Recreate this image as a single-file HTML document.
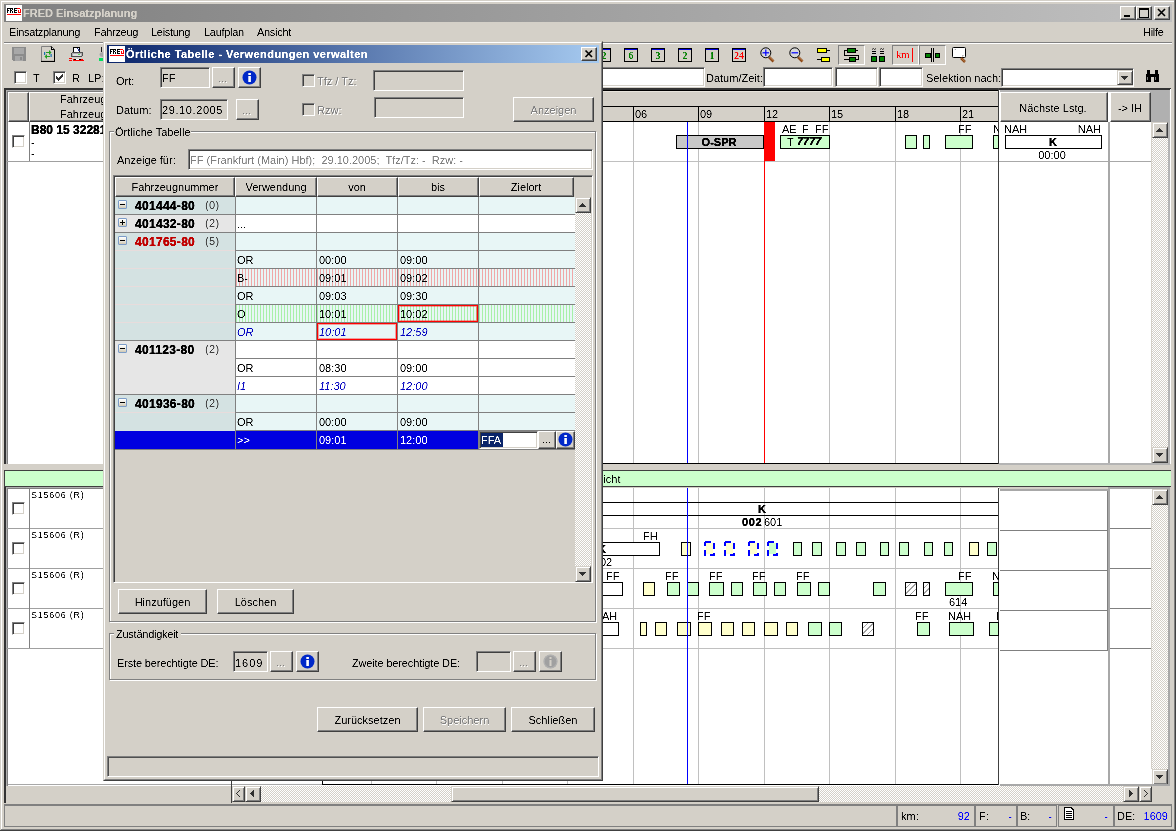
<!DOCTYPE html><html><head><meta charset="utf-8"><style>
*{margin:0;padding:0;box-sizing:border-box}
html,body{width:1176px;height:831px;overflow:hidden;background:#D4D0C8}
body{will-change:transform}
body>div.t{filter:url(#th)}
body{position:relative;font-family:"Liberation Sans",sans-serif;font-size:11px;color:#000}
div{position:absolute}
.t{white-space:nowrap}
.sb{border:1px solid;border-color:#D4D0C8 #404040 #404040 #D4D0C8;box-shadow:inset 1px 1px #fff,inset -1px -1px #808080}
.rb{border:1px solid;border-color:#fff #404040 #404040 #fff;box-shadow:inset -1px -1px #808080}
.sk{border:1px solid;border-color:#808080 #fff #fff #808080;box-shadow:inset 1px 1px #404040,inset -1px -1px #D4D0C8}
.ts{border:1px solid;border-color:#808080 #fff #fff #808080}
</style></head><body><svg width="0" height="0" style="position:absolute"><filter id="th" filterUnits="userSpaceOnUse" x="-20" y="-20" width="1300" height="80" color-interpolation-filters="sRGB"><feComponentTransfer><feFuncA type="linear" slope="2" intercept="-0.5"/></feComponentTransfer></filter></svg><div style="left:0px;top:0px;width:1176px;height:831px;background:#D4D0C8"></div><div style="left:1px;top:1px;width:1173px;height:1px;background:#fff"></div><div style="left:1px;top:1px;width:1px;height:828px;background:#fff"></div><div style="left:1174px;top:0px;width:1px;height:831px;background:#808080"></div><div style="left:1175px;top:0px;width:1px;height:831px;background:#404040"></div><div style="left:1px;top:829px;width:1174px;height:1px;background:#808080"></div><div style="left:0px;top:830px;width:1176px;height:1px;background:#404040"></div><div style="left:4px;top:4px;width:1168px;height:18px;background:linear-gradient(90deg,#808080,#C0C0C0)"></div><div style="left:6px;top:5px;width:16px;height:16px;background:#fff"></div><svg style="position:absolute;left:6px;top:5px;" width="16" height="16" viewBox="0 0 16 16" shape-rendering="crispEdges"><rect x="1" y="3" width="1" height="5" fill="#000"/><rect x="2" y="3" width="2" height="1" fill="#000"/><rect x="2" y="5" width="1" height="1" fill="#000"/><rect x="4" y="3" width="1" height="5" fill="#000"/><rect x="5" y="3" width="2" height="1" fill="#000"/><rect x="6" y="4" width="1" height="1" fill="#000"/><rect x="5" y="5" width="1" height="1" fill="#000"/><rect x="6" y="6" width="1" height="2" fill="#000"/><rect x="8" y="3" width="1" height="5" fill="#000"/><rect x="9" y="3" width="2" height="1" fill="#000"/><rect x="9" y="5" width="2" height="1" fill="#000"/><rect x="9" y="7" width="2" height="1" fill="#000"/><rect x="11" y="3" width="3" height="1" fill="#f00"/><rect x="14" y="4" width="1" height="4" fill="#f00"/><rect x="12" y="7" width="2" height="1" fill="#f00"/><rect x="12" y="5" width="1" height="2" fill="#f00"/><rect x="1" y="9" width="14" height="1" fill="#f00"/></svg><div class="t" style="left:23px;top:6px;font-size:11px;line-height:14px;font-weight:bold;color:#D4D0C8;-webkit-text-stroke:0.15px #D4D0C8">FRED Einsatzplanung</div><div class="rb" style="left:1120px;top:6px;width:16px;height:14px;background:#D4D0C8;"></div><div class="rb" style="left:1136px;top:6px;width:16px;height:14px;background:#D4D0C8;"></div><div class="rb" style="left:1154px;top:6px;width:16px;height:14px;background:#D4D0C8;"></div><svg style="position:absolute;left:1120px;top:6px;" width="16" height="14" viewBox="0 0 16 14" shape-rendering="crispEdges"><rect x="4" y="9" width="6" height="2" fill="#000"/></svg><svg style="position:absolute;left:1136px;top:6px;" width="16" height="14" viewBox="0 0 16 14" shape-rendering="crispEdges"><rect x="3" y="2" width="9" height="9" fill="none" stroke="#000" stroke-width="1" transform="translate(0.5,0.5)"/><rect x="3" y="2" width="9" height="2" fill="#000"/></svg><svg style="position:absolute;left:1154px;top:6px;" width="16" height="14" viewBox="0 0 16 14" shape-rendering="crispEdges"><path d="M4 3 L11 10 M11 3 L4 10" stroke="#000" stroke-width="1.6" shape-rendering="auto"/></svg><div class="t" style="left:9px;top:25px;font-size:11px;line-height:14px;letter-spacing:-0.3px">Einsatzplanung</div><div class="t" style="left:94px;top:25px;font-size:11px;line-height:14px;letter-spacing:-0.3px">Fahrzeug</div><div class="t" style="left:151px;top:25px;font-size:11px;line-height:14px;letter-spacing:-0.3px">Leistung</div><div class="t" style="left:204px;top:25px;font-size:11px;line-height:14px;letter-spacing:-0.3px">Laufplan</div><div class="t" style="left:257px;top:25px;font-size:11px;line-height:14px;letter-spacing:-0.3px">Ansicht</div><div class="t" style="left:1143px;top:25px;font-size:11px;line-height:14px;letter-spacing:-0.3px">Hilfe</div><div style="left:4px;top:42px;width:1168px;height:1px;background:#808080"></div><div style="left:4px;top:43px;width:1168px;height:1px;background:#fff"></div><svg style="position:absolute;left:12px;top:47px;" width="14" height="14" viewBox="0 0 14 14" shape-rendering="crispEdges"><rect x="0" y="0" width="14" height="14" fill="#8C8C8C"/><rect x="2" y="1" width="10" height="6" fill="#A8A8A8"/><rect x="3" y="9" width="8" height="5" fill="#A8A8A8"/><rect x="8" y="10" width="2" height="3" fill="#8C8C8C"/><rect x="0" y="13" width="1" height="1" fill="#D4D0C8"/></svg><svg style="position:absolute;left:41px;top:46px;shape-rendering:auto" width="14" height="16" viewBox="0 0 14 16" shape-rendering="crispEdges"><path d="M0.5 15.5 V0.5 H10.5" fill="none" stroke="#808080"/><path d="M10 0.5 L13.5 4 V15.5 H0" fill="none" stroke="#000"/><path d="M0 15.5 H14" stroke="#000" stroke-width="1.2"/><path d="M10 0 L10 4 L14 4 Z" fill="#000"/><path d="M11 1.5 L11 3 L12.5 3 Z" fill="#fff"/><path d="M5 6 H8 V4 L10.5 6.5 L8 9 V7 H5 Z" fill="#22A020" shape-rendering="auto"/><path d="M9 10 H6 V8 L3.5 10.5 L6 13 V11 H9 Z" fill="#22A020" shape-rendering="auto"/><rect x="3" y="6" width="1.2" height="3" fill="#1870B0"/><rect x="9.5" y="8" width="1.2" height="3" fill="#1870B0"/></svg><svg style="position:absolute;left:69px;top:46px;shape-rendering:crispEdges" width="16" height="16" viewBox="0 0 16 16" shape-rendering="crispEdges"><rect x="4.5" y="1.5" width="6" height="5" fill="#fff" stroke="#000"/><path d="M8.5 2.5 L10.5 5" stroke="#203090" stroke-width="1.2"/><rect x="2.5" y="6.5" width="11" height="4" rx="1.5" fill="#B0B0B0" stroke="#505050"/><rect x="4" y="8" width="8" height="1.5" fill="#E0E0E0"/><rect x="9" y="7.5" width="1.5" height="1" fill="#60E060"/><rect x="0" y="12" width="3" height="1" fill="#f00"/><rect x="0" y="14" width="3" height="1" fill="#f00"/><path d="M4 12.5 H12 L15 14.5 H4 Z" fill="#f00"/><rect x="5" y="13" width="7" height="1" fill="#000"/><rect x="7" y="13" width="3" height="1" fill="#fff"/></svg><svg style="position:absolute;left:96px;top:46px;shape-rendering:auto" width="8" height="16" viewBox="0 0 8 16" shape-rendering="crispEdges"><rect x="5" y="1" width="1" height="5" fill="#202020"/><path d="M7 6 Q3 6.5 3.5 9 Q4 11 7 11 Z" fill="#A8A8A8"/><rect x="3" y="12" width="5" height="3" fill="#00E060"/></svg><div class="sk" style="left:14px;top:71px;width:13px;height:13px;background:#fff;"></div><div class="t" style="left:33px;top:71px;font-size:11px;line-height:14px;">T</div><div class="sk" style="left:53px;top:71px;width:13px;height:13px;background:#fff;"></div><svg style="position:absolute;left:53px;top:71px;" width="13" height="13" viewBox="0 0 13 13" shape-rendering="crispEdges"><rect x="9" y="3" width="1" height="1" fill="#333"/><rect x="8" y="4" width="1" height="1" fill="#333"/><rect x="9" y="4" width="1" height="1" fill="#333"/><rect x="3" y="5" width="1" height="1" fill="#333"/><rect x="7" y="5" width="1" height="1" fill="#333"/><rect x="8" y="5" width="1" height="1" fill="#333"/><rect x="9" y="5" width="1" height="1" fill="#333"/><rect x="3" y="6" width="1" height="1" fill="#333"/><rect x="4" y="6" width="1" height="1" fill="#333"/><rect x="6" y="6" width="1" height="1" fill="#333"/><rect x="7" y="6" width="1" height="1" fill="#333"/><rect x="8" y="6" width="1" height="1" fill="#333"/><rect x="3" y="7" width="1" height="1" fill="#333"/><rect x="4" y="7" width="1" height="1" fill="#333"/><rect x="5" y="7" width="1" height="1" fill="#333"/><rect x="6" y="7" width="1" height="1" fill="#333"/><rect x="7" y="7" width="1" height="1" fill="#333"/><rect x="4" y="8" width="1" height="1" fill="#333"/><rect x="5" y="8" width="1" height="1" fill="#333"/><rect x="6" y="8" width="1" height="1" fill="#333"/><rect x="5" y="9" width="1" height="1" fill="#333"/></svg><div class="t" style="left:72px;top:71px;font-size:11px;line-height:14px;">R</div><div class="t" style="left:88px;top:71px;font-size:11px;line-height:14px;">LP:</div><div style="left:597px;top:48px;width:14px;height:14px;background:#D4D0C8;border:1px solid #000;box-shadow:inset 0 1px 0 #0000E0"></div><div class="t" style="left:597px;top:50px;width:14px;text-align:center;font:bold 10px/12px 'Liberation Serif';color:#008000">2</div><div style="left:624px;top:48px;width:14px;height:14px;background:#D4D0C8;border:1px solid #000;box-shadow:inset 0 1px 0 #0000E0"></div><div class="t" style="left:624px;top:50px;width:14px;text-align:center;font:bold 10px/12px 'Liberation Serif';color:#008000">6</div><div style="left:651px;top:48px;width:14px;height:14px;background:#D4D0C8;border:1px solid #000;box-shadow:inset 0 1px 0 #0000E0"></div><div class="t" style="left:651px;top:50px;width:14px;text-align:center;font:bold 10px/12px 'Liberation Serif';color:#008000">3</div><div style="left:678px;top:48px;width:14px;height:14px;background:#D4D0C8;border:1px solid #000;box-shadow:inset 0 1px 0 #0000E0"></div><div class="t" style="left:678px;top:50px;width:14px;text-align:center;font:bold 10px/12px 'Liberation Serif';color:#008000">2</div><div style="left:705px;top:48px;width:14px;height:14px;background:#D4D0C8;border:1px solid #000;box-shadow:inset 0 1px 0 #0000E0"></div><div class="t" style="left:705px;top:50px;width:14px;text-align:center;font:bold 10px/12px 'Liberation Serif';color:#008000">1</div><div style="left:732px;top:48px;width:14px;height:14px;background:#D4D0C8;border:1px solid #000;box-shadow:inset 0 1px 0 #0000E0"></div><div class="t" style="left:732px;top:50px;width:14px;text-align:center;font:bold 10px/12px 'Liberation Serif';color:#f00">24</div><svg style="position:absolute;left:760px;top:47px;shape-rendering:auto" width="16" height="16" viewBox="0 0 16 16" shape-rendering="crispEdges"><path d="M9 10 L13.5 14.5" stroke="#8B4513" stroke-width="2.6"/><path d="M9.5 9.8 L13.5 13.8" stroke="#E0B080" stroke-width="0.6"/><circle cx="5.8" cy="5.8" r="5" fill="#D8D8D8" stroke="#000" stroke-width="1"/><path d="M2.5 5.8 H9.1" stroke="#0000FF" stroke-width="1.2"/><path d="M5.8 2.5 V9.1" stroke="#0000FF" stroke-width="1.2"/></svg><svg style="position:absolute;left:789px;top:47px;shape-rendering:auto" width="16" height="16" viewBox="0 0 16 16" shape-rendering="crispEdges"><path d="M9 10 L13.5 14.5" stroke="#8B4513" stroke-width="2.6"/><path d="M9.5 9.8 L13.5 13.8" stroke="#E0B080" stroke-width="0.6"/><circle cx="5.8" cy="5.8" r="5" fill="#D8D8D8" stroke="#000" stroke-width="1"/><path d="M2.5 5.8 H9.1" stroke="#0000FF" stroke-width="1.2"/></svg><svg style="position:absolute;left:816px;top:47px;" width="16" height="16" viewBox="0 0 16 16" shape-rendering="crispEdges"><rect x="1.5" y="1.5" width="9" height="4" fill="#FFFF00" stroke="#000"/><path d="M10.5 3.5 H14" stroke="#000"/><rect x="5.5" y="10.5" width="8" height="4" fill="#FFFF00" stroke="#000"/><path d="M1 12.5 H5.5" stroke="#000"/></svg><div style="left:838px;top:45px;width:27px;height:20px;border:1px solid;border-color:#808080 #fff #fff #808080;background:#D4D0C8"></div><div style="left:892px;top:45px;width:27px;height:20px;border:1px solid;border-color:#808080 #fff #fff #808080;background:#D4D0C8"></div><div style="left:919px;top:45px;width:27px;height:20px;border:1px solid;border-color:#808080 #fff #fff #808080;background:#D4D0C8"></div><svg style="position:absolute;left:844px;top:47px;" width="16" height="16" viewBox="0 0 16 16" shape-rendering="crispEdges"><path d="M3 3.5 H0.5 V8.5 H14.5 V12.5 H11" fill="none" stroke="#000"/><path d="M11 3.5 H14 M0 12.5 H5" stroke="#000"/><rect x="3.5" y="1.5" width="8" height="4" fill="#008000" stroke="#000"/><rect x="5.5" y="10.5" width="6" height="4" fill="#008000" stroke="#000"/></svg><svg style="position:absolute;left:870px;top:47px;" width="16" height="16" viewBox="0 0 16 16" shape-rendering="crispEdges"><rect x="1.5" y="9.5" width="5" height="5" fill="#008000" stroke="#000"/><rect x="9.5" y="9.5" width="5" height="5" fill="#008000" stroke="#000"/><path d="M2 4.5 H6 M2 6.5 H6 M10 4.5 H14 M10 6.5 H14" stroke="#000"/><path d="M2 2.5 L3.5 1.5 L4.5 2.5 L6 1.5 M10 2.5 L11.5 1.5 L12.5 2.5 L14 1.5" stroke="#000" fill="none" stroke-width="0.8" shape-rendering="auto"/></svg><div class="t" style="left:896px;top:47px;font:11px/14px 'Liberation Serif';color:#f00;letter-spacing:-0.6px">km</div><div style="left:912px;top:48px;width:1px;height:14px;background:#f00"></div><svg style="position:absolute;left:924px;top:47px;" width="16" height="16" viewBox="0 0 16 16" shape-rendering="crispEdges"><rect x="1.5" y="6.5" width="5" height="4" fill="#008000" stroke="#000"/><rect x="11.5" y="6.5" width="4" height="4" fill="#008000" stroke="#000"/><path d="M7.5 1 V15 M9.5 1 V15" stroke="#000"/></svg><svg style="position:absolute;left:952px;top:47px;shape-rendering:auto" width="16" height="16" viewBox="0 0 16 16" shape-rendering="crispEdges"><rect x="0.5" y="0.5" width="13" height="10" rx="1" fill="#fff" stroke="#000"/><path d="M3 3 V2.5 H4 M11 8 V9 H10" stroke="#A0A0A0" fill="none"/><path d="M9 11 L13 15" stroke="#8B4513" stroke-width="2.5"/><path d="M9.5 11.2 L13 14.7" stroke="#E0B080" stroke-width="0.6"/></svg><div class="sk" style="left:600px;top:67px;width:105px;height:20px;background:#fff;"></div><div class="t" style="left:706px;top:71px;font-size:11px;line-height:14px;">Datum/Zeit:</div><div class="sk" style="left:763px;top:67px;width:70px;height:20px;background:#fff;"></div><div class="sk" style="left:835px;top:67px;width:43px;height:20px;background:#fff;"></div><div class="sk" style="left:879px;top:67px;width:44px;height:20px;background:#fff;"></div><div class="t" style="left:926px;top:71px;font-size:11px;line-height:14px;">Selektion nach:</div><div class="sk" style="left:1001px;top:68px;width:133px;height:19px;background:#fff;"></div><div class="sb" style="left:1117px;top:70px;width:16px;height:15px;background:#D4D0C8"></div><svg style="position:absolute;left:1117px;top:70px;" width="16" height="15" viewBox="0 0 16 15" shape-rendering="crispEdges"><rect x="4" y="6" width="7" height="1" fill="#303030"/><rect x="5" y="7" width="5" height="1" fill="#303030"/><rect x="6" y="8" width="3" height="1" fill="#303030"/><rect x="7" y="9" width="1" height="1" fill="#303030"/></svg><svg style="position:absolute;left:1145px;top:69px;" width="16" height="14" viewBox="0 0 16 14" shape-rendering="crispEdges"><rect x="1" y="5" width="5" height="8" fill="#000"/><rect x="9" y="5" width="5" height="8" fill="#000"/><rect x="2" y="1" width="3" height="5" fill="#000"/><rect x="10" y="1" width="3" height="5" fill="#000"/><rect x="5" y="5" width="5" height="3" fill="#000"/><rect x="2" y="8" width="1" height="3" fill="#808080"/><rect x="10" y="8" width="1" height="3" fill="#808080"/></svg><div style="left:4px;top:88px;width:1167px;height:376px;background:#fff"></div><div style="left:4px;top:88px;width:1167px;height:1px;background:#333"></div><div style="left:4px;top:88px;width:1px;height:376px;background:#333"></div><div style="left:5px;top:89px;width:1165px;height:1px;background:#333"></div><div style="left:5px;top:89px;width:1px;height:375px;background:#333"></div><div style="left:6px;top:90px;width:1164px;height:32px;background:#D4D0C8"></div><div style="left:6px;top:90px;width:584px;height:1px;background:#B0B0B0"></div><div style="left:6px;top:90px;width:1px;height:374px;background:#B0B0B0"></div><div style="left:7px;top:91px;width:583px;height:1px;background:#808080"></div><div style="left:7px;top:91px;width:1px;height:373px;background:#808080"></div><div style="left:590px;top:90px;width:409px;height:1px;background:#000"></div><div style="left:590px;top:91px;width:408px;height:1px;background:#E8E4DC"></div><div class="rb" style="left:8px;top:92px;width:21px;height:30px;background:#D4D0C8;"></div><div class="rb" style="left:29px;top:92px;width:420px;height:30px;background:#D4D0C8;"></div><div class="t" style="left:60px;top:92px;font-size:11px;line-height:14px;">Fahrzeugnummer</div><div class="t" style="left:60px;top:107px;font-size:11px;line-height:14px;">Fahrzeugnummer</div><div style="left:29px;top:122px;width:1px;height:40px;background:#808080"></div><div style="left:6px;top:161px;width:600px;height:1px;background:#A0A0A0"></div><div class="sk" style="left:12px;top:135px;width:13px;height:13px;background:#fff;"></div><div class="t" style="left:31px;top:123px;font-size:12px;line-height:15px;font-weight:bold;-webkit-text-stroke:0.35px currentColor">B80 15 32281-3</div><div class="t" style="left:31px;top:135px;font-size:11px;line-height:14px;">-</div><div class="t" style="left:31px;top:146px;font-size:11px;line-height:14px;">-</div><div style="left:590px;top:106px;width:408px;height:1px;background:#000"></div><div style="left:590px;top:121px;width:408px;height:1px;background:#000"></div><div style="left:633px;top:107px;width:1px;height:14px;background:#000"></div><div style="left:698px;top:107px;width:1px;height:14px;background:#000"></div><div style="left:764px;top:107px;width:1px;height:14px;background:#000"></div><div style="left:829px;top:107px;width:1px;height:14px;background:#000"></div><div style="left:895px;top:107px;width:1px;height:14px;background:#000"></div><div style="left:960px;top:107px;width:1px;height:14px;background:#000"></div><div class="t" style="left:635px;top:107px;font-size:11px;line-height:14px;">06</div><div class="t" style="left:700px;top:107px;font-size:11px;line-height:14px;">09</div><div class="t" style="left:766px;top:107px;font-size:11px;line-height:14px;">12</div><div class="t" style="left:831px;top:107px;font-size:11px;line-height:14px;">15</div><div class="t" style="left:897px;top:107px;font-size:11px;line-height:14px;">18</div><div class="t" style="left:962px;top:107px;font-size:11px;line-height:14px;">21</div><div class="t" style="left:568px;top:107px;font-size:11px;line-height:14px;">03</div><div style="left:633px;top:122px;width:1px;height:341px;background:#C0C0C0"></div><div style="left:698px;top:122px;width:1px;height:341px;background:#C0C0C0"></div><div style="left:764px;top:122px;width:1px;height:341px;background:#C0C0C0"></div><div style="left:829px;top:122px;width:1px;height:341px;background:#C0C0C0"></div><div style="left:895px;top:122px;width:1px;height:341px;background:#C0C0C0"></div><div style="left:960px;top:122px;width:1px;height:341px;background:#C0C0C0"></div><div style="left:567px;top:122px;width:1px;height:341px;background:#C0C0C0"></div><div style="left:590px;top:161px;width:408px;height:1px;background:#C0C0C0"></div><div style="left:998px;top:88px;width:1px;height:376px;background:#404040"></div><div style="left:590px;top:463px;width:408px;height:1px;background:#000"></div><div style="left:764px;top:122px;width:1px;height:341px;background:#FF0000"></div><div style="left:764px;top:122px;width:11px;height:39px;background:#FF0000"></div><div style="left:676px;top:135px;width:88px;height:14px;background:#C8C8C8;border:1px solid #000;"></div><div class="t" style="left:519px;width:400px;text-align:center;top:135px;font-size:11px;line-height:14px;font-weight:bold;-webkit-text-stroke:0.35px currentColor">O-SPR</div><div style="left:780px;top:135px;width:50px;height:14px;background:#CCFFCC;border:1px solid #000;"></div><div class="t" style="left:787px;top:135px;font-size:11px;line-height:14px;">T</div><div class="t" style="left:797px;top:134px;font-size:11px;line-height:14px;font-weight:bold;-webkit-text-stroke:0.35px currentColor"><i>7777</i></div><div class="t" style="left:782px;top:122px;font-size:11px;line-height:14px;">AE</div><div class="t" style="left:802px;top:122px;font-size:11px;line-height:14px;">F</div><div class="t" style="left:815px;top:122px;font-size:11px;line-height:14px;">FF</div><div style="left:905px;top:135px;width:12px;height:14px;background:#CCFFCC;border:1px solid #000;"></div><div style="left:923px;top:135px;width:7px;height:14px;background:#CCFFCC;border:1px solid #000;"></div><div style="left:945px;top:135px;width:28px;height:14px;background:#CCFFCC;border:1px solid #000;"></div><div style="left:993px;top:135px;width:6px;height:14px;background:#CCFFCC;border:1px solid #000;"></div><div class="t" style="left:958px;top:122px;font-size:11px;line-height:14px;">FF</div><div class="t" style="left:993px;top:122px;font-size:11px;line-height:14px;">N</div><div style="left:687px;top:122px;width:1px;height:341px;background:#0000FF"></div><div style="left:999px;top:90px;width:171px;height:375px;background:#fff"></div><div style="left:1000px;top:90px;width:170px;height:1px;background:#B4B4B4"></div><div style="left:1000px;top:91px;width:170px;height:1px;background:#B4B4B4"></div><div class="rb" style="left:1000px;top:92px;width:108px;height:30px;background:#D4D0C8;"></div><div class="t" style="left:853px;width:400px;text-align:center;top:101px;font-size:11px;line-height:14px;">Nächste Lstg.</div><div class="rb" style="left:1110px;top:92px;width:41px;height:30px;background:#D4D0C8;"></div><div class="t" style="left:930px;width:400px;text-align:center;top:101px;font-size:11px;line-height:14px;">-&gt; IH</div><div style="left:1151px;top:90px;width:19px;height:32px;background:#B0B0B0"></div><div style="left:1108px;top:122px;width:1px;height:341px;background:#A8A8A8"></div><div style="left:1109px;top:122px;width:1px;height:341px;background:#A8A8A8"></div><div style="left:999px;top:161px;width:153px;height:1px;background:#A8A8A8"></div><div class="t" style="left:1004px;top:122px;font-size:11px;line-height:14px;">NAH</div><div class="t" style="left:701px;width:400px;text-align:right;top:122px;font-size:11px;line-height:14px;">NAH</div><div style="left:1005px;top:135px;width:97px;height:14px;background:#fff;border:1px solid #000;"></div><div class="t" style="left:853px;width:400px;text-align:center;top:135px;font-size:11px;line-height:14px;font-weight:bold;-webkit-text-stroke:0.35px currentColor">K</div><div class="t" style="left:852px;width:400px;text-align:center;top:148px;font-size:11px;line-height:14px;">00:00</div><div style="left:1152px;top:122px;width:16px;height:341px;background-color:#fff;background-image:linear-gradient(45deg,#D4D0C8 25%,transparent 25%,transparent 75%,#D4D0C8 75%),linear-gradient(45deg,#D4D0C8 25%,transparent 25%,transparent 75%,#D4D0C8 75%);background-size:2px 2px;background-position:0 0,1px 1px;"></div><div class="sb" style="left:1152px;top:122px;width:16px;height:16px;background:#D4D0C8"></div><svg style="position:absolute;left:1152px;top:122px;" width="16" height="16" viewBox="0 0 16 16" shape-rendering="crispEdges"><rect x="7" y="6" width="1" height="1" fill="#303030"/><rect x="6" y="7" width="3" height="1" fill="#303030"/><rect x="5" y="8" width="5" height="1" fill="#303030"/><rect x="4" y="9" width="7" height="1" fill="#303030"/></svg><div class="sb" style="left:1152px;top:447px;width:16px;height:16px;background:#D4D0C8"></div><svg style="position:absolute;left:1152px;top:447px;" width="16" height="16" viewBox="0 0 16 16" shape-rendering="crispEdges"><rect x="4" y="6" width="7" height="1" fill="#303030"/><rect x="5" y="7" width="5" height="1" fill="#303030"/><rect x="6" y="8" width="3" height="1" fill="#303030"/><rect x="7" y="9" width="1" height="1" fill="#303030"/></svg><div style="left:999px;top:463px;width:171px;height:1px;background:#B4B4B4"></div><div style="left:999px;top:464px;width:171px;height:1px;background:#B4B4B4"></div><div style="left:1151px;top:122px;width:1px;height:341px;background:#D4D0C8"></div><div style="left:1168px;top:122px;width:1px;height:343px;background:#B4B4B4"></div><div style="left:1169px;top:90px;width:1px;height:375px;background:#B4B4B4"></div><div style="left:5px;top:470px;width:1166px;height:17px;background:#CCFFCC;border-top:1px solid #404040;border-bottom:1px solid #404040"></div><div class="t" style="left:574px;top:472px;font-size:11px;line-height:14px;">Übersicht</div><div style="left:4px;top:470px;width:1px;height:17px;background:#404040"></div><div style="left:4px;top:487px;width:1166px;height:299px;background:#fff"></div><div style="left:4px;top:487px;width:1px;height:316px;background:#333"></div><div style="left:5px;top:487px;width:1px;height:316px;background:#333"></div><div style="left:6px;top:487px;width:1px;height:299px;background:#B0B0B0"></div><div style="left:7px;top:487px;width:1px;height:299px;background:#808080"></div><div style="left:6px;top:487px;width:590px;height:1px;background:#B0B0B0"></div><div style="left:7px;top:488px;width:589px;height:1px;background:#808080"></div><div style="left:590px;top:487px;width:408px;height:1px;background:#D4D0C8"></div><div style="left:6px;top:528px;width:596px;height:1px;background:#A0A0A0"></div><div style="left:29px;top:488px;width:1px;height:40px;background:#808080"></div><div class="sk" style="left:12px;top:502px;width:13px;height:13px;background:#fff;"></div><div class="t" style="left:31px;top:489px;font-size:9px;line-height:12px;letter-spacing:0.75px">S15606 (R)</div><div style="left:6px;top:568px;width:596px;height:1px;background:#A0A0A0"></div><div style="left:29px;top:528px;width:1px;height:40px;background:#808080"></div><div class="sk" style="left:12px;top:542px;width:13px;height:13px;background:#fff;"></div><div class="t" style="left:31px;top:529px;font-size:9px;line-height:12px;letter-spacing:0.75px">S15606 (R)</div><div style="left:6px;top:608px;width:596px;height:1px;background:#A0A0A0"></div><div style="left:29px;top:568px;width:1px;height:40px;background:#808080"></div><div class="sk" style="left:12px;top:582px;width:13px;height:13px;background:#fff;"></div><div class="t" style="left:31px;top:569px;font-size:9px;line-height:12px;letter-spacing:0.75px">S15606 (R)</div><div style="left:6px;top:648px;width:596px;height:1px;background:#A0A0A0"></div><div style="left:29px;top:608px;width:1px;height:40px;background:#808080"></div><div class="sk" style="left:12px;top:622px;width:13px;height:13px;background:#fff;"></div><div class="t" style="left:31px;top:609px;font-size:9px;line-height:12px;letter-spacing:0.75px">S15606 (R)</div><div style="left:633px;top:488px;width:1px;height:297px;background:#C0C0C0"></div><div style="left:698px;top:488px;width:1px;height:297px;background:#C0C0C0"></div><div style="left:764px;top:488px;width:1px;height:297px;background:#C0C0C0"></div><div style="left:829px;top:488px;width:1px;height:297px;background:#C0C0C0"></div><div style="left:895px;top:488px;width:1px;height:297px;background:#C0C0C0"></div><div style="left:960px;top:488px;width:1px;height:297px;background:#C0C0C0"></div><div style="left:567px;top:488px;width:1px;height:297px;background:#C0C0C0"></div><div style="left:590px;top:528px;width:408px;height:1px;background:#C0C0C0"></div><div style="left:590px;top:568px;width:408px;height:1px;background:#C0C0C0"></div><div style="left:590px;top:608px;width:408px;height:1px;background:#C0C0C0"></div><div style="left:590px;top:648px;width:408px;height:1px;background:#C0C0C0"></div><div style="left:998px;top:488px;width:1px;height:297px;background:#404040"></div><div style="left:590px;top:502px;width:408px;height:1px;background:#000"></div><div style="left:590px;top:515px;width:408px;height:1px;background:#000"></div><div class="t" style="left:562px;width:400px;text-align:center;top:502px;font-size:11px;line-height:14px;font-weight:bold;-webkit-text-stroke:0.35px currentColor">K</div><div class="t" style="left:742px;top:515px;font-size:11px;line-height:14px;font-weight:bold;letter-spacing:0.6px;-webkit-text-stroke:0.35px currentColor">002</div><div class="t" style="left:764px;top:515px;font-size:11px;line-height:14px;">601</div><div class="t" style="left:643px;top:529px;font-size:11px;line-height:14px;">FH</div><div style="left:590px;top:542px;width:70px;height:14px;background:#fff;border:1px solid #000;"></div><div class="t" style="left:600px;top:555px;font-size:11px;line-height:14px;">02</div><div class="t" style="left:598px;top:542px;font-size:11px;line-height:14px;font-weight:bold;-webkit-text-stroke:0.35px currentColor">K</div><div style="left:681px;top:542px;width:10px;height:14px;background:#FFFFCC;border:1px solid #000;"></div><svg style="position:absolute;left:704px;top:541px;" width="11" height="15" viewBox="0 0 11 15" shape-rendering="crispEdges"><rect x="2" y="2" width="7" height="11" fill="#FFFFCC"/><rect x="0" y="1" width="2" height="4" fill="#0000FF"/><rect x="1" y="0" width="6" height="2" fill="#0000FF"/><rect x="9" y="2" width="2" height="6" fill="#0000FF"/><rect x="9" y="12" width="2" height="3" fill="#0000FF"/><rect x="6" y="13" width="5" height="2" fill="#0000FF"/><rect x="0" y="9" width="2" height="6" fill="#0000FF"/></svg><svg style="position:absolute;left:724px;top:541px;" width="11" height="15" viewBox="0 0 11 15" shape-rendering="crispEdges"><rect x="2" y="2" width="7" height="11" fill="#FFFFCC"/><rect x="0" y="1" width="2" height="4" fill="#0000FF"/><rect x="1" y="0" width="6" height="2" fill="#0000FF"/><rect x="9" y="2" width="2" height="6" fill="#0000FF"/><rect x="9" y="12" width="2" height="3" fill="#0000FF"/><rect x="6" y="13" width="5" height="2" fill="#0000FF"/><rect x="0" y="9" width="2" height="6" fill="#0000FF"/></svg><svg style="position:absolute;left:748px;top:541px;" width="11" height="15" viewBox="0 0 11 15" shape-rendering="crispEdges"><rect x="2" y="2" width="7" height="11" fill="#FFFFCC"/><rect x="0" y="1" width="2" height="4" fill="#0000FF"/><rect x="1" y="0" width="6" height="2" fill="#0000FF"/><rect x="9" y="2" width="2" height="6" fill="#0000FF"/><rect x="9" y="12" width="2" height="3" fill="#0000FF"/><rect x="6" y="13" width="5" height="2" fill="#0000FF"/><rect x="0" y="9" width="2" height="6" fill="#0000FF"/></svg><svg style="position:absolute;left:767px;top:541px;" width="11" height="15" viewBox="0 0 11 15" shape-rendering="crispEdges"><rect x="2" y="2" width="7" height="11" fill="#CCFFCC"/><rect x="0" y="1" width="2" height="4" fill="#0000FF"/><rect x="1" y="0" width="6" height="2" fill="#0000FF"/><rect x="9" y="2" width="2" height="6" fill="#0000FF"/><rect x="9" y="12" width="2" height="3" fill="#0000FF"/><rect x="6" y="13" width="5" height="2" fill="#0000FF"/><rect x="0" y="9" width="2" height="6" fill="#0000FF"/></svg><div style="left:793px;top:542px;width:9px;height:14px;background:#CCFFCC;border:1px solid #000;"></div><div style="left:812px;top:542px;width:10px;height:14px;background:#CCFFCC;border:1px solid #000;"></div><div style="left:836px;top:542px;width:10px;height:14px;background:#CCFFCC;border:1px solid #000;"></div><div style="left:856px;top:542px;width:10px;height:14px;background:#CCFFCC;border:1px solid #000;"></div><div style="left:880px;top:542px;width:9px;height:14px;background:#CCFFCC;border:1px solid #000;"></div><div style="left:899px;top:542px;width:10px;height:14px;background:#CCFFCC;border:1px solid #000;"></div><div style="left:924px;top:542px;width:9px;height:14px;background:#CCFFCC;border:1px solid #000;"></div><div style="left:944px;top:542px;width:9px;height:14px;background:#CCFFCC;border:1px solid #000;"></div><div style="left:987px;top:542px;width:10px;height:14px;background:#CCFFCC;border:1px solid #000;"></div><div style="left:969px;top:542px;width:10px;height:14px;background:#FFFFCC;border:1px solid #000;"></div><div class="t" style="left:606px;top:569px;font-size:11px;line-height:14px;">FF</div><div class="t" style="left:665px;top:569px;font-size:11px;line-height:14px;">FF</div><div class="t" style="left:709px;top:569px;font-size:11px;line-height:14px;">FF</div><div class="t" style="left:752px;top:569px;font-size:11px;line-height:14px;">FF</div><div class="t" style="left:796px;top:569px;font-size:11px;line-height:14px;">FF</div><div class="t" style="left:958px;top:569px;font-size:11px;line-height:14px;">FF</div><div class="t" style="left:992px;top:569px;font-size:11px;line-height:14px;">N</div><div style="left:590px;top:582px;width:33px;height:14px;background:#fff;border:1px solid #000;"></div><div style="left:643px;top:582px;width:12px;height:14px;background:#FFFFCC;border:1px solid #000;"></div><div style="left:667px;top:582px;width:13px;height:14px;background:#CCFFCC;border:1px solid #000;"></div><div style="left:687px;top:582px;width:12px;height:14px;background:#CCFFCC;border:1px solid #000;"></div><div style="left:709px;top:582px;width:15px;height:14px;background:#CCFFCC;border:1px solid #000;"></div><div style="left:731px;top:582px;width:12px;height:14px;background:#CCFFCC;border:1px solid #000;"></div><div style="left:753px;top:582px;width:14px;height:14px;background:#CCFFCC;border:1px solid #000;"></div><div style="left:774px;top:582px;width:12px;height:14px;background:#CCFFCC;border:1px solid #000;"></div><div style="left:797px;top:582px;width:14px;height:14px;background:#CCFFCC;border:1px solid #000;"></div><div style="left:818px;top:582px;width:12px;height:14px;background:#CCFFCC;border:1px solid #000;"></div><div style="left:873px;top:582px;width:13px;height:14px;background:#CCFFCC;border:1px solid #000;"></div><div style="left:945px;top:582px;width:28px;height:14px;background:#CCFFCC;border:1px solid #000;"></div><div style="left:993px;top:582px;width:6px;height:14px;background:#CCFFCC;border:1px solid #000;"></div><div style="left:905px;top:582px;width:12px;height:14px;background:repeating-linear-gradient(135deg,#fff 0 3px,#A0A0A0 3px 4px);border:1px solid #000;"></div><div style="left:923px;top:582px;width:7px;height:14px;background:repeating-linear-gradient(135deg,#fff 0 3px,#A0A0A0 3px 4px);border:1px solid #000;"></div><div class="t" style="left:949px;top:595px;font-size:11px;line-height:14px;">614</div><div class="t" style="left:594px;top:609px;font-size:11px;line-height:14px;">NAH</div><div class="t" style="left:697px;top:609px;font-size:11px;line-height:14px;">FF</div><div class="t" style="left:915px;top:609px;font-size:11px;line-height:14px;">FF</div><div class="t" style="left:948px;top:609px;font-size:11px;line-height:14px;">NAH</div><div class="t" style="left:996px;top:609px;font-size:11px;line-height:14px;">I</div><div style="left:590px;top:622px;width:29px;height:14px;background:#fff;border:1px solid #000;"></div><div style="left:640px;top:622px;width:7px;height:14px;background:#FFFFCC;border:1px solid #000;"></div><div style="left:655px;top:622px;width:12px;height:14px;background:#FFFFCC;border:1px solid #000;"></div><div style="left:677px;top:622px;width:14px;height:14px;background:#FFFFCC;border:1px solid #000;"></div><div style="left:698px;top:622px;width:14px;height:14px;background:#FFFFCC;border:1px solid #000;"></div><div style="left:721px;top:622px;width:13px;height:14px;background:#FFFFCC;border:1px solid #000;"></div><div style="left:742px;top:622px;width:13px;height:14px;background:#FFFFCC;border:1px solid #000;"></div><div style="left:764px;top:622px;width:14px;height:14px;background:#FFFFCC;border:1px solid #000;"></div><div style="left:786px;top:622px;width:12px;height:14px;background:#FFFFCC;border:1px solid #000;"></div><div style="left:808px;top:622px;width:14px;height:14px;background:#CCFFCC;border:1px solid #000;"></div><div style="left:829px;top:622px;width:13px;height:14px;background:#CCFFCC;border:1px solid #000;"></div><div style="left:917px;top:622px;width:13px;height:14px;background:#CCFFCC;border:1px solid #000;"></div><div style="left:949px;top:622px;width:25px;height:14px;background:#CCFFCC;border:1px solid #000;"></div><div style="left:989px;top:622px;width:10px;height:14px;background:#CCFFCC;border:1px solid #000;"></div><div style="left:862px;top:622px;width:12px;height:14px;background:repeating-linear-gradient(135deg,#fff 0 3px,#A0A0A0 3px 4px);border:1px solid #000;"></div><div style="left:687px;top:488px;width:1px;height:297px;background:#0000FF"></div><div style="left:999px;top:488px;width:170px;height:297px;background:#fff"></div><div style="left:999px;top:487px;width:171px;height:1px;background:#D4D0C8"></div><div style="left:999px;top:488px;width:171px;height:1px;background:#D4D0C8"></div><div style="left:1000px;top:489px;width:108px;height:1px;background:#A8A8A8"></div><div style="left:1000px;top:490px;width:108px;height:1px;background:#A8A8A8"></div><div style="left:1110px;top:487px;width:60px;height:1px;background:#A8A8A8"></div><div style="left:1110px;top:488px;width:60px;height:1px;background:#A8A8A8"></div><div style="left:1000px;top:530px;width:107px;height:1px;background:#808080"></div><div style="left:1110px;top:528px;width:42px;height:1px;background:#808080"></div><div style="left:1000px;top:570px;width:107px;height:1px;background:#808080"></div><div style="left:1110px;top:568px;width:42px;height:1px;background:#808080"></div><div style="left:1000px;top:610px;width:107px;height:1px;background:#808080"></div><div style="left:1110px;top:608px;width:42px;height:1px;background:#808080"></div><div style="left:1000px;top:650px;width:107px;height:1px;background:#808080"></div><div style="left:1110px;top:648px;width:42px;height:1px;background:#808080"></div><div style="left:1107px;top:491px;width:1px;height:160px;background:#808080"></div><div style="left:1108px;top:487px;width:1px;height:298px;background:#A8A8A8"></div><div style="left:1109px;top:487px;width:1px;height:298px;background:#A8A8A8"></div><div style="left:1152px;top:489px;width:16px;height:296px;background-color:#fff;background-image:linear-gradient(45deg,#D4D0C8 25%,transparent 25%,transparent 75%,#D4D0C8 75%),linear-gradient(45deg,#D4D0C8 25%,transparent 25%,transparent 75%,#D4D0C8 75%);background-size:2px 2px;background-position:0 0,1px 1px;"></div><div class="sb" style="left:1152px;top:489px;width:16px;height:16px;background:#D4D0C8"></div><svg style="position:absolute;left:1152px;top:489px;" width="16" height="16" viewBox="0 0 16 16" shape-rendering="crispEdges"><rect x="7" y="6" width="1" height="1" fill="#303030"/><rect x="6" y="7" width="3" height="1" fill="#303030"/><rect x="5" y="8" width="5" height="1" fill="#303030"/><rect x="4" y="9" width="7" height="1" fill="#303030"/></svg><div class="sb" style="left:1152px;top:769px;width:16px;height:16px;background:#D4D0C8"></div><svg style="position:absolute;left:1152px;top:769px;" width="16" height="16" viewBox="0 0 16 16" shape-rendering="crispEdges"><rect x="4" y="6" width="7" height="1" fill="#303030"/><rect x="5" y="7" width="5" height="1" fill="#303030"/><rect x="6" y="8" width="3" height="1" fill="#303030"/><rect x="7" y="9" width="1" height="1" fill="#303030"/></svg><div style="left:1151px;top:505px;width:1px;height:264px;background:#D4D0C8"></div><div style="left:371px;top:781px;width:1px;height:3px;background:#C0C0C0"></div><div style="left:436px;top:781px;width:1px;height:3px;background:#C0C0C0"></div><div style="left:502px;top:781px;width:1px;height:3px;background:#C0C0C0"></div><div style="left:567px;top:781px;width:1px;height:3px;background:#C0C0C0"></div><div style="left:8px;top:784px;width:314px;height:1px;background:#A8A8A8"></div><div style="left:322px;top:781px;width:1px;height:4px;background:#000"></div><div style="left:322px;top:784px;width:676px;height:1px;background:#000"></div><div style="left:1000px;top:784px;width:170px;height:1px;background:#A8A8A8"></div><div style="left:1000px;top:785px;width:170px;height:1px;background:#A8A8A8"></div><div style="left:1168px;top:489px;width:1px;height:297px;background:#A8A8A8"></div><div style="left:1169px;top:489px;width:1px;height:297px;background:#A8A8A8"></div><div style="left:6px;top:786px;width:1164px;height:17px;background:#D4D0C8"></div><div style="left:231px;top:781px;width:1px;height:22px;background:#404040"></div><div style="left:232px;top:786px;width:920px;height:16px;background-color:#fff;background-image:linear-gradient(45deg,#D4D0C8 25%,transparent 25%,transparent 75%,#D4D0C8 75%),linear-gradient(45deg,#D4D0C8 25%,transparent 25%,transparent 75%,#D4D0C8 75%);background-size:2px 2px;background-position:0 0,1px 1px;"></div><div class="sb" style="left:232px;top:786px;width:13px;height:16px;background:#D4D0C8"></div><svg style="position:absolute;left:232px;top:786px;" width="13" height="16" viewBox="0 0 13 16" shape-rendering="crispEdges"><rect x="7" y="4" width="1" height="1" fill="#303030"/><rect x="6" y="5" width="1" height="1" fill="#303030"/><rect x="5" y="6" width="1" height="1" fill="#303030"/><rect x="4" y="7" width="1" height="1" fill="#303030"/><rect x="5" y="8" width="1" height="1" fill="#303030"/><rect x="6" y="9" width="1" height="1" fill="#303030"/><rect x="7" y="10" width="1" height="1" fill="#303030"/></svg><div class="sb" style="left:245px;top:786px;width:16px;height:16px;background:#D4D0C8"></div><svg style="position:absolute;left:245px;top:786px;" width="16" height="16" viewBox="0 0 16 16" shape-rendering="crispEdges"><rect x="5" y="7" width="1" height="1" fill="#303030"/><rect x="6" y="6" width="1" height="3" fill="#303030"/><rect x="7" y="5" width="1" height="5" fill="#303030"/><rect x="8" y="4" width="1" height="7" fill="#303030"/></svg><div class="sb" style="left:451px;top:786px;width:368px;height:16px;background:#D4D0C8"></div><div class="sb" style="left:1123px;top:786px;width:16px;height:16px;background:#D4D0C8"></div><svg style="position:absolute;left:1123px;top:786px;" width="16" height="16" viewBox="0 0 16 16" shape-rendering="crispEdges"><rect x="6" y="4" width="1" height="7" fill="#303030"/><rect x="7" y="5" width="1" height="5" fill="#303030"/><rect x="8" y="6" width="1" height="3" fill="#303030"/><rect x="9" y="7" width="1" height="1" fill="#303030"/></svg><div class="sb" style="left:1139px;top:786px;width:13px;height:16px;background:#D4D0C8"></div><svg style="position:absolute;left:1139px;top:786px;" width="13" height="16" viewBox="0 0 13 16" shape-rendering="crispEdges"><rect x="5" y="4" width="1" height="1" fill="#303030"/><rect x="6" y="5" width="1" height="1" fill="#303030"/><rect x="7" y="6" width="1" height="1" fill="#303030"/><rect x="8" y="7" width="1" height="1" fill="#303030"/><rect x="7" y="8" width="1" height="1" fill="#303030"/><rect x="6" y="9" width="1" height="1" fill="#303030"/><rect x="5" y="10" width="1" height="1" fill="#303030"/></svg><div style="left:4px;top:804px;width:1168px;height:1px;background:#808080"></div><div style="left:4px;top:805px;width:893px;height:22px;border:1px solid #808080"></div><div style="left:897px;top:805px;width:78px;height:22px;border:1px solid #808080"></div><div style="left:975px;top:805px;width:42px;height:22px;border:1px solid #808080"></div><div style="left:1017px;top:805px;width:40px;height:22px;border:1px solid #808080"></div><div style="left:1058px;top:805px;width:56px;height:22px;border:1px solid #808080"></div><div style="left:1114px;top:805px;width:58px;height:22px;border:1px solid #808080"></div><div class="t" style="left:901px;top:809px;font-size:11px;line-height:14px;">km:</div><div class="t" style="left:570px;width:400px;text-align:right;top:809px;font-size:11px;line-height:14px;color:#0000FF">92</div><div class="t" style="left:979px;top:809px;font-size:11px;line-height:14px;">F:</div><div class="t" style="left:612px;width:400px;text-align:right;top:809px;font-size:11px;line-height:14px;color:#0000FF">-</div><div class="t" style="left:1020px;top:809px;font-size:11px;line-height:14px;">B:</div><div class="t" style="left:652px;width:400px;text-align:right;top:809px;font-size:11px;line-height:14px;color:#0000FF">-</div><svg style="position:absolute;left:1063px;top:807px;" width="12" height="14" viewBox="0 0 12 14" shape-rendering="crispEdges"><path d="M1.5 0.5 H8 L10.5 3 V12.5 H1.5 Z" fill="#fff" stroke="#000"/><path d="M3 4.5 H9 M3 6.5 H9 M3 8.5 H9 M3 10.5 H9" stroke="#000"/></svg><div class="t" style="left:708px;width:400px;text-align:right;top:809px;font-size:11px;line-height:14px;color:#0000FF">-</div><div class="t" style="left:1117px;top:809px;font-size:11px;line-height:14px;">DE:</div><div class="t" style="left:768px;width:400px;text-align:right;top:809px;font-size:11px;line-height:14px;color:#0000FF">1609</div><div style="left:103px;top:41px;width:500px;height:740px;background:#D4D0C8;border:1px solid;border-color:#D4D0C8 #404040 #404040 #D4D0C8"></div><div style="left:104px;top:42px;width:498px;height:738px;border:1px solid;border-color:#fff #808080 #808080 #fff"></div><div style="left:107px;top:45px;width:492px;height:18px;background:linear-gradient(90deg,#0A246A,#A6CAF0)"></div><div style="left:109px;top:46px;width:16px;height:16px;background:#fff"></div><svg style="position:absolute;left:109px;top:46px;" width="16" height="16" viewBox="0 0 16 16" shape-rendering="crispEdges"><rect x="1" y="3" width="1" height="5" fill="#000"/><rect x="2" y="3" width="2" height="1" fill="#000"/><rect x="2" y="5" width="1" height="1" fill="#000"/><rect x="4" y="3" width="1" height="5" fill="#000"/><rect x="5" y="3" width="2" height="1" fill="#000"/><rect x="6" y="4" width="1" height="1" fill="#000"/><rect x="5" y="5" width="1" height="1" fill="#000"/><rect x="6" y="6" width="1" height="2" fill="#000"/><rect x="8" y="3" width="1" height="5" fill="#000"/><rect x="9" y="3" width="2" height="1" fill="#000"/><rect x="9" y="5" width="2" height="1" fill="#000"/><rect x="9" y="7" width="2" height="1" fill="#000"/><rect x="11" y="3" width="3" height="1" fill="#f00"/><rect x="14" y="4" width="1" height="4" fill="#f00"/><rect x="12" y="7" width="2" height="1" fill="#f00"/><rect x="12" y="5" width="1" height="2" fill="#f00"/><rect x="1" y="9" width="14" height="1" fill="#f00"/></svg><div class="t" style="left:126px;top:47px;font-size:11px;line-height:14px;font-weight:bold;color:#fff;letter-spacing:0.45px;-webkit-text-stroke:0.15px #fff">Örtliche Tabelle - Verwendungen verwalten</div><div class="rb" style="left:581px;top:47px;width:16px;height:14px;background:#D4D0C8;"></div><svg style="position:absolute;left:581px;top:47px;" width="16" height="14" viewBox="0 0 16 14" shape-rendering="crispEdges"><path d="M4.5 3.5 L11 10 M11 3.5 L4.5 10" stroke="#000" stroke-width="1.7" shape-rendering="auto"/></svg><div class="t" style="left:116px;top:74px;font-size:11px;line-height:14px;">Ort:</div><div class="sk" style="left:160px;top:67px;width:50px;height:21px;background:#D4D0C8;"></div><div class="t" style="left:162px;top:71px;font-size:11px;line-height:14px;">FF</div><div class="rb" style="left:212px;top:67px;width:23px;height:21px;background:#D4D0C8;"></div><div style="left:219px;top:81px;width:1px;height:1px;background:#808080"></div><div style="left:220px;top:82px;width:1px;height:1px;background:#fff"></div><div style="left:222px;top:81px;width:1px;height:1px;background:#808080"></div><div style="left:223px;top:82px;width:1px;height:1px;background:#fff"></div><div style="left:225px;top:81px;width:1px;height:1px;background:#808080"></div><div style="left:226px;top:82px;width:1px;height:1px;background:#fff"></div><div class="rb" style="left:238px;top:67px;width:23px;height:21px;background:#D4D0C8;"></div><svg style="position:absolute;left:242px;top:70px;shape-rendering:auto" width="15" height="15" viewBox="0 0 15 15" shape-rendering="crispEdges"><circle cx="7.5" cy="7.5" r="7" fill="#0028C8" shape-rendering="auto"/><rect x="6.3" y="6" width="2.6" height="6" fill="#fff"/><rect x="6.3" y="3" width="2.6" height="2" fill="#fff"/></svg><div class="t" style="left:116px;top:103px;font-size:11px;line-height:14px;">Datum:</div><div class="sk" style="left:160px;top:99px;width:68px;height:21px;background:#D4D0C8;"></div><div class="t" style="left:162px;top:103px;font-size:11px;line-height:14px;letter-spacing:0.6px">29.10.2005</div><div class="rb" style="left:236px;top:99px;width:23px;height:21px;background:#D4D0C8;"></div><div style="left:243px;top:113px;width:1px;height:1px;background:#808080"></div><div style="left:244px;top:114px;width:1px;height:1px;background:#fff"></div><div style="left:246px;top:113px;width:1px;height:1px;background:#808080"></div><div style="left:247px;top:114px;width:1px;height:1px;background:#fff"></div><div style="left:249px;top:113px;width:1px;height:1px;background:#808080"></div><div style="left:250px;top:114px;width:1px;height:1px;background:#fff"></div><div class="sk" style="left:302px;top:74px;width:13px;height:13px;background:#D4D0C8;"></div><div class="t" style="left:318px;top:75px;font-size:11px;line-height:14px;color:#fff">Tfz / Tz:</div><div class="t" style="left:317px;top:74px;font-size:11px;line-height:14px;color:#808080">Tfz / Tz:</div><div class="sk" style="left:373px;top:70px;width:91px;height:21px;background:#D4D0C8;"></div><div class="sk" style="left:302px;top:103px;width:13px;height:13px;background:#D4D0C8;"></div><div class="t" style="left:318px;top:104px;font-size:11px;line-height:14px;color:#fff">Rzw:</div><div class="t" style="left:317px;top:103px;font-size:11px;line-height:14px;color:#808080">Rzw:</div><div class="sk" style="left:374px;top:97px;width:90px;height:21px;background:#D4D0C8;"></div><div class="rb" style="left:513px;top:97px;width:81px;height:25px;background:#D4D0C8;"></div><div class="t" style="left:513px;width:81px;text-align:center;top:104px;line-height:14px;color:#fff;padding-left:1px">Anzeigen</div><div class="t" style="left:513px;width:81px;text-align:center;top:103px;line-height:14px;color:#808080">Anzeigen</div><div style="left:109px;top:131px;width:487px;height:491px;border:1px solid #808080;box-shadow:inset 1px 1px #fff,1px 1px #fff"></div><div style="left:114px;top:128px;width:77px;height:6px;background:#D4D0C8"></div><div class="t" style="left:115px;top:125px;font-size:11px;line-height:14px;letter-spacing:0px">Örtliche Tabelle</div><div class="t" style="left:117px;top:153px;font-size:11px;line-height:14px;">Anzeige für:</div><div class="sk" style="left:188px;top:149px;width:405px;height:21px;background:#fff;"></div><div class="t" style="left:190px;top:153px;font-size:11px;line-height:14px;color:#808080">FF (Frankfurt (Main) Hbf);&nbsp; 29.10.2005;&nbsp; Tfz/Tz: -&nbsp; Rzw: -</div><div class="sk" style="left:113px;top:175px;width:480px;height:408px;background:#D4D0C8;"></div><div class="rb" style="left:115px;top:177px;width:120px;height:20px;background:#D4D0C8;"></div><div class="t" style="left:-25px;width:400px;text-align:center;top:180px;font-size:11px;line-height:14px;">Fahrzeugnummer</div><div class="rb" style="left:235px;top:177px;width:82px;height:20px;background:#D4D0C8;"></div><div class="t" style="left:76px;width:400px;text-align:center;top:180px;font-size:11px;line-height:14px;">Verwendung</div><div class="rb" style="left:317px;top:177px;width:81px;height:20px;background:#D4D0C8;"></div><div class="t" style="left:157px;width:400px;text-align:center;top:180px;font-size:11px;line-height:14px;">von</div><div class="rb" style="left:398px;top:177px;width:81px;height:20px;background:#D4D0C8;"></div><div class="t" style="left:238px;width:400px;text-align:center;top:180px;font-size:11px;line-height:14px;">bis</div><div class="rb" style="left:479px;top:177px;width:95px;height:20px;background:#D4D0C8;"></div><div class="t" style="left:326px;width:400px;text-align:center;top:180px;font-size:11px;line-height:14px;">Zielort</div><div style="left:115px;top:197px;width:120px;height:18px;background:#D4E2E2"></div><div style="left:236px;top:197px;width:339px;height:17px;background:#E8F6F6"></div><div style="left:236px;top:214px;width:339px;height:1px;background:#808080"></div><div style="left:118px;top:200px;width:9px;height:9px;border:1px solid #7C9CC8;border-radius:1px;background:linear-gradient(#fff,#E8E4D8 60%,#D0C8B4)"></div><div style="left:120px;top:204px;width:5px;height:1px;background:#000"></div><div class="t" style="left:135px;top:199px;font-size:12px;line-height:15px;font-weight:bold;color:#000;letter-spacing:0.3px;-webkit-text-stroke:0.35px currentColor">401444-80</div><div class="t" style="left:205px;top:198px;font-size:11px;line-height:14px;color:#404040;letter-spacing:0.3px">(0)</div><div style="left:115px;top:215px;width:120px;height:18px;background:#E6E6E6"></div><div style="left:236px;top:215px;width:339px;height:17px;background:#fff"></div><div style="left:236px;top:232px;width:339px;height:1px;background:#808080"></div><div style="left:118px;top:218px;width:9px;height:9px;border:1px solid #7C9CC8;border-radius:1px;background:linear-gradient(#fff,#E8E4D8 60%,#D0C8B4)"></div><div style="left:120px;top:222px;width:5px;height:1px;background:#000"></div><div style="left:122px;top:220px;width:1px;height:5px;background:#000"></div><div class="t" style="left:135px;top:217px;font-size:12px;line-height:15px;font-weight:bold;color:#000;letter-spacing:0.3px;-webkit-text-stroke:0.35px currentColor">401432-80</div><div class="t" style="left:205px;top:216px;font-size:11px;line-height:14px;color:#404040;letter-spacing:0.3px">(2)</div><div class="t" style="left:237px;top:217px;font-size:11px;line-height:14px;">...</div><div style="left:115px;top:233px;width:120px;height:18px;background:#D4E2E2"></div><div style="left:236px;top:233px;width:339px;height:17px;background:#E8F6F6"></div><div style="left:236px;top:250px;width:339px;height:1px;background:#808080"></div><div style="left:118px;top:236px;width:9px;height:9px;border:1px solid #7C9CC8;border-radius:1px;background:linear-gradient(#fff,#E8E4D8 60%,#D0C8B4)"></div><div style="left:120px;top:240px;width:5px;height:1px;background:#000"></div><div class="t" style="left:135px;top:235px;font-size:12px;line-height:15px;font-weight:bold;color:#C00000;letter-spacing:0.3px;-webkit-text-stroke:0.35px currentColor">401765-80</div><div class="t" style="left:205px;top:234px;font-size:11px;line-height:14px;color:#404040;letter-spacing:0.3px">(5)</div><div style="left:115px;top:251px;width:120px;height:18px;background:#D4E2E2"></div><div style="left:236px;top:251px;width:339px;height:17px;background:#E8F6F6"></div><div style="left:236px;top:268px;width:339px;height:1px;background:#808080"></div><div class="t" style="left:237px;top:253px;font-size:11px;line-height:14px;">OR</div><div class="t" style="left:319px;top:253px;font-size:11px;line-height:14px;">00:00</div><div class="t" style="left:400px;top:253px;font-size:11px;line-height:14px;">09:00</div><div style="left:115px;top:269px;width:120px;height:18px;background:#D4E2E2"></div><div style="left:236px;top:269px;width:339px;height:17px;background:repeating-linear-gradient(90deg,#F0A8A8 0 1px,#E8F6F6 1px 3px)"></div><div style="left:236px;top:286px;width:339px;height:1px;background:#808080"></div><div class="t" style="left:237px;top:271px;font-size:11px;line-height:14px;">B-</div><div class="t" style="left:319px;top:271px;font-size:11px;line-height:14px;">09:01</div><div class="t" style="left:400px;top:271px;font-size:11px;line-height:14px;">09:02</div><div style="left:115px;top:287px;width:120px;height:18px;background:#D4E2E2"></div><div style="left:236px;top:287px;width:339px;height:17px;background:#E8F6F6"></div><div style="left:236px;top:304px;width:339px;height:1px;background:#808080"></div><div class="t" style="left:237px;top:289px;font-size:11px;line-height:14px;">OR</div><div class="t" style="left:319px;top:289px;font-size:11px;line-height:14px;">09:03</div><div class="t" style="left:400px;top:289px;font-size:11px;line-height:14px;">09:30</div><div style="left:115px;top:305px;width:120px;height:18px;background:#D4E2E2"></div><div style="left:236px;top:305px;width:339px;height:17px;background:repeating-linear-gradient(90deg,#A8F0A8 0 1px,#E8F6F6 1px 3px)"></div><div style="left:236px;top:322px;width:339px;height:1px;background:#808080"></div><div class="t" style="left:237px;top:307px;font-size:11px;line-height:14px;">O</div><div class="t" style="left:319px;top:307px;font-size:11px;line-height:14px;">10:01</div><div class="t" style="left:400px;top:307px;font-size:11px;line-height:14px;">10:02</div><div style="left:115px;top:323px;width:120px;height:18px;background:#D4E2E2"></div><div style="left:236px;top:323px;width:339px;height:17px;background:#E8F6F6"></div><div style="left:236px;top:340px;width:339px;height:1px;background:#808080"></div><div class="t" style="left:237px;top:325px;font-size:11px;line-height:14px;font-style:italic;color:#0000C0">OR</div><div class="t" style="left:319px;top:325px;font-size:11px;line-height:14px;font-style:italic;color:#0000C0">10:01</div><div class="t" style="left:400px;top:325px;font-size:11px;line-height:14px;font-style:italic;color:#0000C0">12:59</div><div style="left:115px;top:341px;width:120px;height:18px;background:#E6E6E6"></div><div style="left:236px;top:341px;width:339px;height:17px;background:#fff"></div><div style="left:236px;top:358px;width:339px;height:1px;background:#808080"></div><div style="left:118px;top:344px;width:9px;height:9px;border:1px solid #7C9CC8;border-radius:1px;background:linear-gradient(#fff,#E8E4D8 60%,#D0C8B4)"></div><div style="left:120px;top:348px;width:5px;height:1px;background:#000"></div><div class="t" style="left:135px;top:343px;font-size:12px;line-height:15px;font-weight:bold;color:#000;letter-spacing:0.3px;-webkit-text-stroke:0.35px currentColor">401123-80</div><div class="t" style="left:205px;top:342px;font-size:11px;line-height:14px;color:#404040;letter-spacing:0.3px">(2)</div><div style="left:115px;top:359px;width:120px;height:18px;background:#E6E6E6"></div><div style="left:236px;top:359px;width:339px;height:17px;background:#fff"></div><div style="left:236px;top:376px;width:339px;height:1px;background:#808080"></div><div class="t" style="left:237px;top:361px;font-size:11px;line-height:14px;">OR</div><div class="t" style="left:319px;top:361px;font-size:11px;line-height:14px;">08:30</div><div class="t" style="left:400px;top:361px;font-size:11px;line-height:14px;">09:00</div><div style="left:115px;top:377px;width:120px;height:18px;background:#E6E6E6"></div><div style="left:236px;top:377px;width:339px;height:17px;background:#fff"></div><div style="left:236px;top:394px;width:339px;height:1px;background:#808080"></div><div class="t" style="left:237px;top:379px;font-size:11px;line-height:14px;font-style:italic;color:#0000C0">I1</div><div class="t" style="left:319px;top:379px;font-size:11px;line-height:14px;font-style:italic;color:#0000C0">11:30</div><div class="t" style="left:400px;top:379px;font-size:11px;line-height:14px;font-style:italic;color:#0000C0">12:00</div><div style="left:115px;top:395px;width:120px;height:18px;background:#D4E2E2"></div><div style="left:236px;top:395px;width:339px;height:17px;background:#E8F6F6"></div><div style="left:236px;top:412px;width:339px;height:1px;background:#808080"></div><div style="left:118px;top:398px;width:9px;height:9px;border:1px solid #7C9CC8;border-radius:1px;background:linear-gradient(#fff,#E8E4D8 60%,#D0C8B4)"></div><div style="left:120px;top:402px;width:5px;height:1px;background:#000"></div><div class="t" style="left:135px;top:397px;font-size:12px;line-height:15px;font-weight:bold;color:#000;letter-spacing:0.3px;-webkit-text-stroke:0.35px currentColor">401936-80</div><div class="t" style="left:205px;top:396px;font-size:11px;line-height:14px;color:#404040;letter-spacing:0.3px">(2)</div><div style="left:115px;top:413px;width:120px;height:18px;background:#D4E2E2"></div><div style="left:236px;top:413px;width:339px;height:17px;background:#E8F6F6"></div><div style="left:236px;top:430px;width:339px;height:1px;background:#808080"></div><div class="t" style="left:237px;top:415px;font-size:11px;line-height:14px;">OR</div><div class="t" style="left:319px;top:415px;font-size:11px;line-height:14px;">00:00</div><div class="t" style="left:400px;top:415px;font-size:11px;line-height:14px;">09:00</div><div style="left:115px;top:214px;width:120px;height:1px;background:#808080"></div><div style="left:115px;top:232px;width:120px;height:1px;background:#808080"></div><div style="left:115px;top:340px;width:120px;height:1px;background:#808080"></div><div style="left:115px;top:394px;width:120px;height:1px;background:#808080"></div><div style="left:115px;top:250px;width:120px;height:1px;background:#E8DCDC"></div><div style="left:115px;top:268px;width:120px;height:1px;background:#E8DCDC"></div><div style="left:115px;top:286px;width:120px;height:1px;background:#E8DCDC"></div><div style="left:115px;top:304px;width:120px;height:1px;background:#E8DCDC"></div><div style="left:115px;top:322px;width:120px;height:1px;background:#E8DCDC"></div><div style="left:115px;top:412px;width:120px;height:1px;background:#E8DCDC"></div><div style="left:235px;top:197px;width:1px;height:252px;background:#808080"></div><div style="left:316px;top:197px;width:1px;height:252px;background:#808080"></div><div style="left:397px;top:197px;width:1px;height:252px;background:#808080"></div><div style="left:478px;top:197px;width:1px;height:252px;background:#808080"></div><div style="left:398px;top:305px;width:80px;height:17px;border:1px solid #FF0000;box-shadow:inset 0 0 0 1px rgba(255,0,0,0.35)"></div><div style="left:317px;top:323px;width:80px;height:17px;border:1px solid #FF0000;box-shadow:inset 0 0 0 1px rgba(255,0,0,0.35)"></div><div style="left:115px;top:431px;width:460px;height:18px;background:#0000E0"></div><div style="left:235px;top:431px;width:1px;height:18px;background:#808080"></div><div style="left:316px;top:431px;width:1px;height:18px;background:#808080"></div><div style="left:397px;top:431px;width:1px;height:18px;background:#808080"></div><div style="left:478px;top:431px;width:1px;height:18px;background:#808080"></div><div style="left:115px;top:449px;width:460px;height:1px;background:#808080"></div><div class="t" style="left:237px;top:433px;font-size:11px;line-height:14px;color:#fff">&gt;&gt;</div><div class="t" style="left:319px;top:433px;font-size:11px;line-height:14px;color:#fff">09:01</div><div class="t" style="left:400px;top:433px;font-size:11px;line-height:14px;color:#fff">12:00</div><div class="sk" style="left:479px;top:431px;width:59px;height:18px;background:#fff;"></div><div style="left:481px;top:433px;width:22px;height:14px;background:#0A246A"></div><div class="t" style="left:481px;top:433px;font-size:11px;line-height:14px;color:#fff">FFA</div><div class="rb" style="left:538px;top:431px;width:18px;height:18px;background:#D4D0C8;"></div><div style="left:543px;top:442px;width:1px;height:1px;background:#000"></div><div style="left:546px;top:442px;width:1px;height:1px;background:#000"></div><div style="left:549px;top:442px;width:1px;height:1px;background:#000"></div><div class="rb" style="left:556px;top:431px;width:19px;height:18px;background:#D4D0C8;"></div><svg style="position:absolute;left:558px;top:432px;shape-rendering:auto" width="15" height="15" viewBox="0 0 15 15" shape-rendering="crispEdges"><circle cx="7.5" cy="7.5" r="7" fill="#0028C8" shape-rendering="auto"/><rect x="6.3" y="6" width="2.6" height="6" fill="#fff"/><rect x="6.3" y="3" width="2.6" height="2" fill="#fff"/></svg><div style="left:575px;top:197px;width:16px;height:385px;background-color:#fff;background-image:linear-gradient(45deg,#D4D0C8 25%,transparent 25%,transparent 75%,#D4D0C8 75%),linear-gradient(45deg,#D4D0C8 25%,transparent 25%,transparent 75%,#D4D0C8 75%);background-size:2px 2px;background-position:0 0,1px 1px;"></div><div class="sb" style="left:575px;top:197px;width:16px;height:16px;background:#D4D0C8"></div><svg style="position:absolute;left:575px;top:197px;" width="16" height="16" viewBox="0 0 16 16" shape-rendering="crispEdges"><rect x="7" y="6" width="1" height="1" fill="#303030"/><rect x="6" y="7" width="3" height="1" fill="#303030"/><rect x="5" y="8" width="5" height="1" fill="#303030"/><rect x="4" y="9" width="7" height="1" fill="#303030"/></svg><div class="sb" style="left:575px;top:566px;width:16px;height:16px;background:#D4D0C8"></div><svg style="position:absolute;left:575px;top:566px;" width="16" height="16" viewBox="0 0 16 16" shape-rendering="crispEdges"><rect x="4" y="6" width="7" height="1" fill="#303030"/><rect x="5" y="7" width="5" height="1" fill="#303030"/><rect x="6" y="8" width="3" height="1" fill="#303030"/><rect x="7" y="9" width="1" height="1" fill="#303030"/></svg><div class="rb" style="left:118px;top:589px;width:89px;height:25px;background:#D4D0C8;"></div><div class="t" style="left:118px;width:89px;text-align:center;top:595px;line-height:14px">Hinzufügen</div><div class="rb" style="left:217px;top:589px;width:77px;height:25px;background:#D4D0C8;"></div><div class="t" style="left:217px;width:77px;text-align:center;top:595px;line-height:14px">Löschen</div><div style="left:109px;top:633px;width:487px;height:47px;border:1px solid #808080;box-shadow:inset 1px 1px #fff,1px 1px #fff"></div><div style="left:114px;top:630px;width:67px;height:6px;background:#D4D0C8"></div><div class="t" style="left:116px;top:627px;font-size:11px;line-height:14px;letter-spacing:-0.25px">Zuständigkeit</div><div class="t" style="left:117px;top:656px;font-size:11px;line-height:14px;letter-spacing:-0.15px">Erste berechtigte DE:</div><div class="sk" style="left:233px;top:651px;width:35px;height:21px;background:#D4D0C8;"></div><div class="t" style="left:235px;top:656px;font-size:11px;line-height:14px;letter-spacing:1px">1609</div><div class="rb" style="left:270px;top:651px;width:23px;height:21px;background:#D4D0C8;"></div><div style="left:277px;top:665px;width:1px;height:1px;background:#808080"></div><div style="left:278px;top:666px;width:1px;height:1px;background:#fff"></div><div style="left:280px;top:665px;width:1px;height:1px;background:#808080"></div><div style="left:281px;top:666px;width:1px;height:1px;background:#fff"></div><div style="left:283px;top:665px;width:1px;height:1px;background:#808080"></div><div style="left:284px;top:666px;width:1px;height:1px;background:#fff"></div><div class="rb" style="left:296px;top:651px;width:23px;height:21px;background:#D4D0C8;"></div><svg style="position:absolute;left:300px;top:654px;shape-rendering:auto" width="15" height="15" viewBox="0 0 15 15" shape-rendering="crispEdges"><circle cx="7.5" cy="7.5" r="7" fill="#0028C8" shape-rendering="auto"/><rect x="6.3" y="6" width="2.6" height="6" fill="#fff"/><rect x="6.3" y="3" width="2.6" height="2" fill="#fff"/></svg><div class="t" style="left:352px;top:656px;font-size:11px;line-height:14px;letter-spacing:-0.15px">Zweite berechtigte DE:</div><div class="sk" style="left:476px;top:651px;width:35px;height:21px;background:#D4D0C8;"></div><div class="rb" style="left:513px;top:651px;width:23px;height:21px;background:#D4D0C8;"></div><div style="left:520px;top:665px;width:1px;height:1px;background:#808080"></div><div style="left:521px;top:666px;width:1px;height:1px;background:#fff"></div><div style="left:523px;top:665px;width:1px;height:1px;background:#808080"></div><div style="left:524px;top:666px;width:1px;height:1px;background:#fff"></div><div style="left:526px;top:665px;width:1px;height:1px;background:#808080"></div><div style="left:527px;top:666px;width:1px;height:1px;background:#fff"></div><div class="rb" style="left:539px;top:651px;width:23px;height:21px;background:#D4D0C8;"></div><svg style="position:absolute;left:543px;top:654px;shape-rendering:auto" width="15" height="15" viewBox="0 0 15 15" shape-rendering="crispEdges"><circle cx="7.5" cy="7.5" r="7" fill="#A0A0A0" shape-rendering="auto"/><circle cx="7.5" cy="7.5" r="6.3" fill="none" stroke="#fff" stroke-width="0.4" opacity="0.5"/><rect x="6.5" y="6" width="2" height="6" fill="#D4D0C8"/><rect x="6.5" y="3" width="2" height="2" fill="#D4D0C8"/></svg><div class="rb" style="left:317px;top:707px;width:101px;height:25px;background:#D4D0C8;"></div><div class="t" style="left:317px;width:101px;text-align:center;top:713px;line-height:14px">Zurücksetzen</div><div class="rb" style="left:423px;top:707px;width:83px;height:25px;background:#D4D0C8;"></div><div class="t" style="left:423px;width:83px;text-align:center;top:714px;line-height:14px;color:#fff;padding-left:1px">Speichern</div><div class="t" style="left:423px;width:83px;text-align:center;top:713px;line-height:14px;color:#808080">Speichern</div><div class="rb" style="left:511px;top:707px;width:84px;height:25px;background:#D4D0C8;"></div><div class="t" style="left:511px;width:84px;text-align:center;top:713px;line-height:14px">Schließen</div><div style="left:107px;top:756px;width:492px;height:21px;border:1px solid;border-color:#808080 #fff #fff #808080;box-shadow:inset 1px 1px #505050"></div></body></html>
